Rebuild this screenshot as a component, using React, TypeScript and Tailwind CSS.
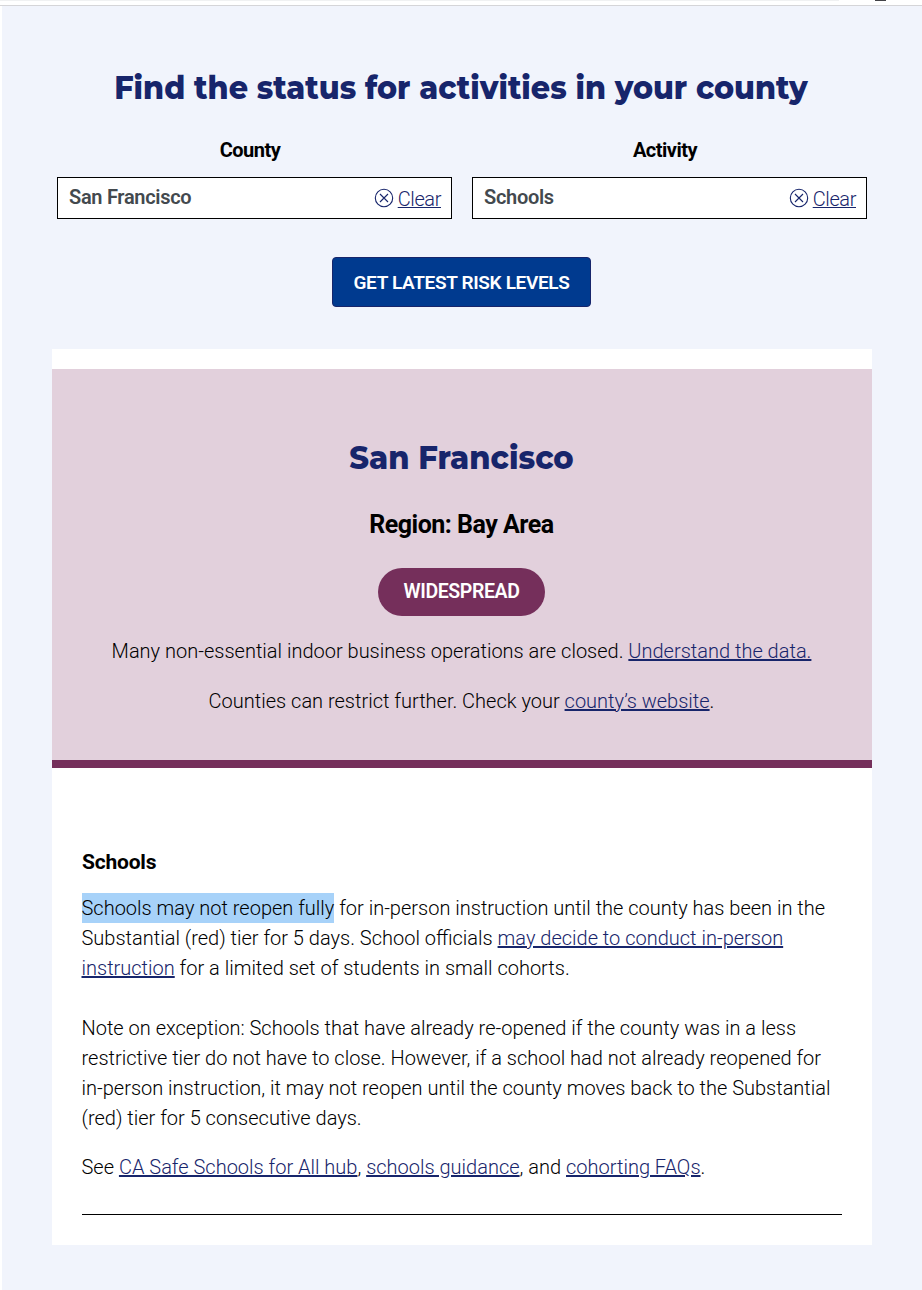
import React from 'react';

const link = 'text-[#17256b] underline decoration-2 underline-offset-1';
const heading = 'text-center font-[Montserrat,Inter,sans-serif] text-[33px] font-extrabold leading-[44px] text-[#17256b]';

function Clear() {
  return (
    <a className="flex items-center gap-[4px] text-[#17256b]">
      <svg width="20" height="20" viewBox="0 0 20 20" fill="none" stroke="currentColor" strokeWidth="1.1">
        <circle cx="10" cy="10" r="8.7" />
        <path d="M6 6l8 8M14 6l-8 8" />
      </svg>
      <span className="relative top-px tracking-[-0.4px] underline decoration-1 underline-offset-1">Clear</span>
    </a>
  );
}

function Field({ label, value }: { label: string; value: string }) {
  return (
    <div className="w-[395px]">
      <div className="h-[30px] pr-[9px] text-center text-[20px] font-bold leading-[30px] tracking-[-0.5px]">{label}</div>
      <div className="mt-3 flex h-[42px] items-center justify-between border border-black bg-white pl-[11px] pr-[10px]">
        <span className="-mt-[2px] text-[20px] font-semibold tracking-[-0.3px] text-[#43494e]">{value}</span>
        <Clear />
      </div>
    </div>
  );
}

export default function App() {
  return (
    <div className="h-[1290px] w-[922px] overflow-hidden bg-white font-[Roboto,sans-serif] text-[20px] font-light leading-[30px] text-black">
      <div className="flex h-[6px] items-start justify-between border-b border-[#d5d5d8]">
        <div className="h-px w-[839px] bg-[#f0f1f2]" />
        <div className="mr-[36px] h-px w-[11px] bg-[#424246]" />
      </div>
      <div className="ml-[2px] h-[1284px] bg-[#f1f4fc] pt-[59px]">
        <h1 className={`${heading} -ml-[2px] scale-x-[0.914]`}>Find the status for activities in your county</h1>
        <div className="ml-[55px] mt-[26px] flex gap-5">
          <Field label="County" value="San Francisco" />
          <Field label="Activity" value="Schools" />
        </div>
        <button className="ml-[330px] mt-[38px] block h-[50px] w-[259px] rounded-[4px] border border-[#17256b] bg-[#003a8f] pt-px text-[19px] font-semibold tracking-[-0.34px] text-white">GET LATEST RISK LEVELS</button>
        <main className="ml-[50px] mt-[42px] h-[896px] w-[820px] bg-white pt-5">
          <section className="h-[399px] border-b-8 border-[#752f5b] bg-[#e2d0dc] pr-px pt-[66px] text-center">
            <h2 className={`${heading} scale-x-[0.924]`}>San Francisco</h2>
            <h3 className="mt-[31px] text-[25px] font-bold leading-[30px] tracking-[-0.5px]">Region: Bay Area</h3>
            <div className="ml-[326px] mt-[28px] h-12 w-[167px] rounded-full bg-[#752f5b] text-[19.5px] font-semibold leading-[47px] tracking-[-0.4px] text-white">WIDESPREAD</div>
            <p className="mt-5">Many non-essential indoor business operations are closed. <a className={link}>Understand the data.</a></p>
            <p className="mt-5">Counties can restrict further. Check your <a className={link}>county’s website</a>.</p>
          </section>
          <section className="mx-[30px] pt-[79px]">
            <h4 className="text-[21px] font-bold leading-[30px] tracking-[-0.2px]">Schools</h4>
            <div className="-ml-[0.5px] whitespace-nowrap">
              <p className="mt-4"><span className="bg-[#a7d2f9] py-[3px]">Schools may not reopen fully</span> for in-person instruction until the county has been in the<br />Substantial (red) tier for 5 days. School officials <a className={link}>may decide to conduct in-person<br />instruction</a> for a limited set of students in small cohorts.</p>
              <p className="mt-[30px]">Note on exception: Schools that have already re-opened if the county was in a less<br />restrictive tier do not have to close. However, if a school had not already reopened for<br />in-person instruction, it may not reopen until the county moves back to the Substantial<br />(red) tier for 5 consecutive days.</p>
              <p className="mt-[19px]">See <a className={link}>CA Safe Schools for All hub</a>, <a className={link}>schools guidance</a>, and <a className={link}>cohorting FAQs</a>.</p>
            </div>
            <hr className="mt-8 border-black" />
          </section>
        </main>
      </div>
    </div>
  );
}
